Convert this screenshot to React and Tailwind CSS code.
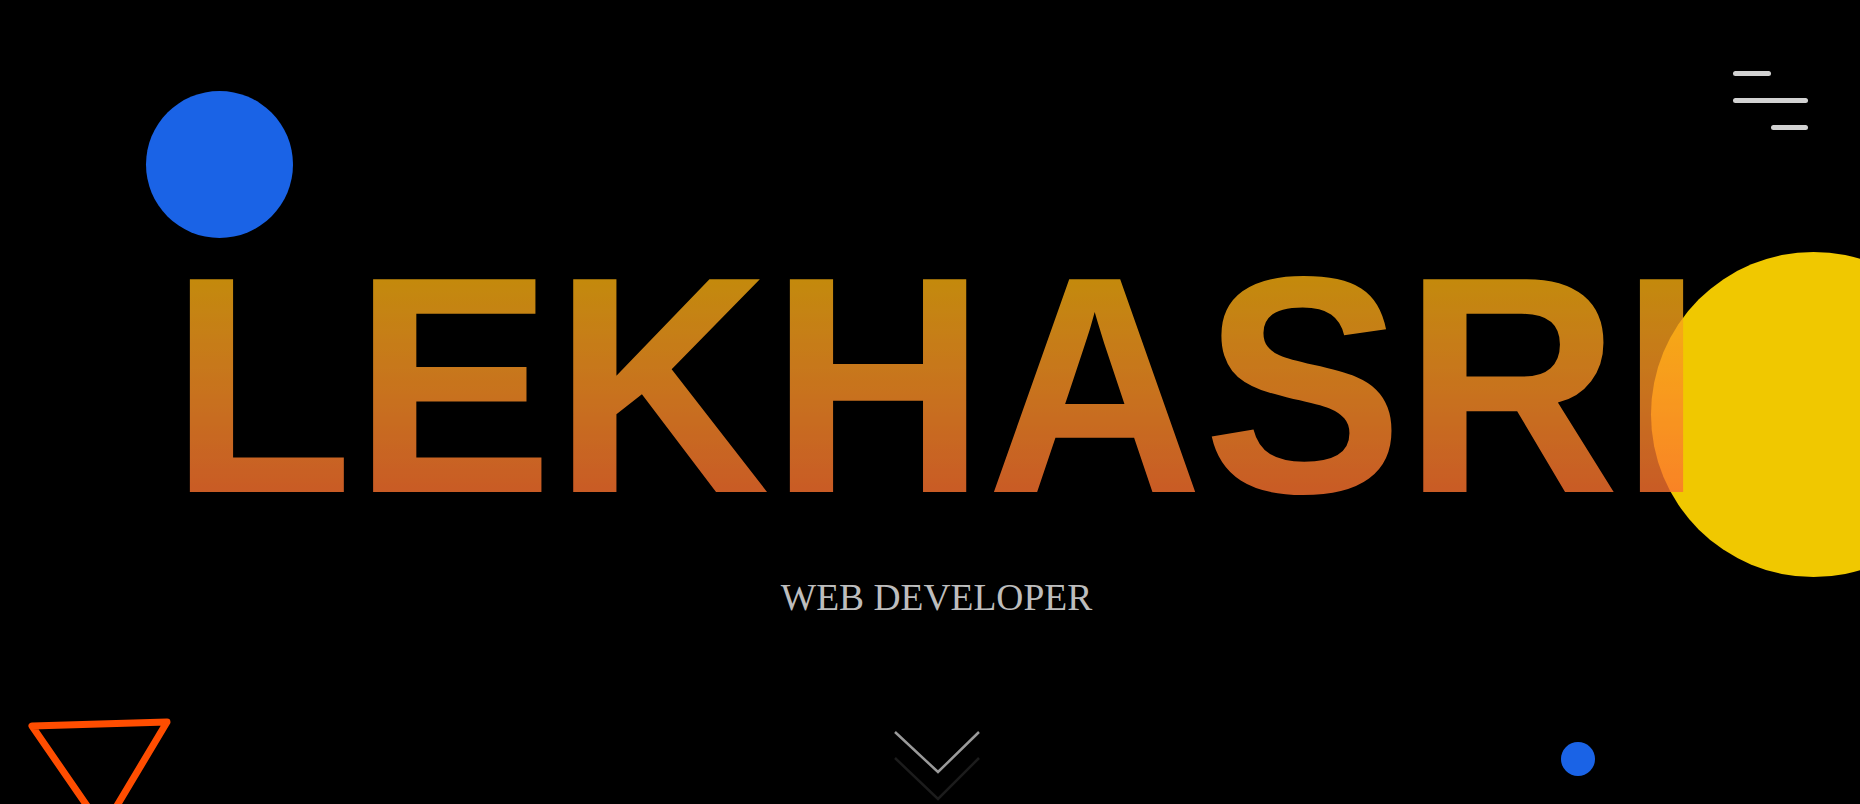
export default function App() {
  return (
    <div className="relative h-[804px] w-full overflow-hidden bg-black">
      {/* decorative shapes */}
      <div className="absolute left-[146px] top-[91px] h-[147px] w-[147px] rounded-full bg-[#1a63e6]" />
      <div className="absolute left-[1651px] top-[252px] h-[325px] w-[325px] rounded-full bg-[#f0c800]" />
      <div className="absolute left-[1561px] top-[742px] h-[34px] w-[34px] rounded-full bg-[#1a63e6]" />
      <svg className="absolute left-0 top-[700px]" width="200" height="140" viewBox="0 0 200 140">
        <polygon points="32,26 167,22 103,129" fill="none" stroke="#ff4d00" strokeWidth="7" strokeLinejoin="round" />
      </svg>

      {/* menu */}
      <button className="absolute right-[52px] top-[71px] flex w-[75px] flex-col items-start gap-[22px]">
        <span className="h-[5px] w-[38px] rounded-full bg-[#d2d2d2]" />
        <span className="h-[5px] w-[75px] rounded-full bg-[#d2d2d2]" />
        <span className="ml-[38px] h-[5px] w-[37px] rounded-full bg-[#d2d2d2]" />
      </button>

      {/* hero */}
      <div className="relative flex flex-col items-center pl-[13px] pt-[238px]">
        <h1
          className="origin-[50%_254px] scale-y-[1.031] whitespace-nowrap bg-linear-to-b from-[#f5af0c] from-[13%] to-[#fc722f] to-[85%] bg-clip-text text-[300px] font-bold leading-none text-transparent opacity-80"
          style={{ fontFamily: '"Liberation Sans", Arial, sans-serif' }}
        >
          LEKHASRI
        </h1>
        <p
          className="mt-[41px] text-[37.5px] leading-none text-[#bdbdbd]"
          style={{ fontFamily: '"Liberation Serif", "Times New Roman", serif' }}
        >
          WEB DEVELOPER
        </p>
        <svg className="mt-[112px]" width="90" height="74" viewBox="0 0 90 74">
          <polyline points="3,29 46,70 87,29" fill="none" stroke="#1c1c1c" strokeWidth="2.5" />
          <polyline points="3,3 46,43 87,3" fill="none" stroke="#9a9a9a" strokeWidth="2.5" />
        </svg>
      </div>
    </div>
  );
}
